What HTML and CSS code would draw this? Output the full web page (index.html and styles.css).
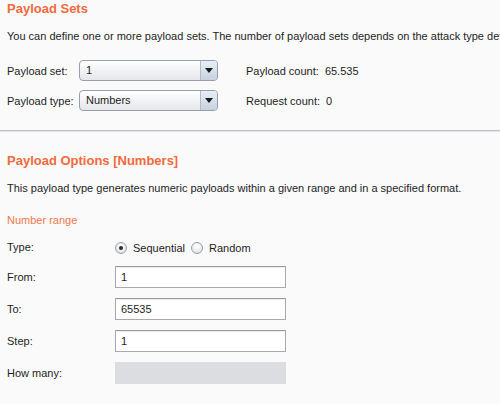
FILE: index.html
```html
<!DOCTYPE html>
<html lang="en">
<head>
  <meta charset="UTF-8">
  <title>Payloads</title>
  <link rel="stylesheet" href="styles.css">
</head>
<body>
  <section class="panel">
    <h2 class="title">Payload Sets</h2>
    <p class="desc">You can define one or more payload sets. The number of payload sets depends on the attack type defined in the Positions tab.</p>
    <div class="set-grid">
      <span class="label">Payload set:</span>
      <div class="combo"><span class="combo-value">1</span><span class="combo-arrow"></span></div>
      <span class="count">Payload count:&nbsp; 65.535</span>

      <span class="label">Payload type:</span>
      <div class="combo"><span class="combo-value">Numbers</span><span class="combo-arrow"></span></div>
      <span class="count">Request count:&nbsp; 0</span>
    </div>
  </section>

  <div class="divider"></div>

  <section class="panel">
    <h2 class="title title-options">Payload Options [Numbers]</h2>
    <p class="desc">This payload type generates numeric payloads within a given range and in a specified format.</p>
    <h3 class="subtitle">Number range</h3>
    <div class="range-grid">
      <span class="label">Type:</span>
      <div class="radios">
        <label class="radio"><span class="dot checked"></span>Sequential</label>
        <label class="radio"><span class="dot"></span>Random</label>
      </div>

      <span class="label">From:</span>
      <input class="field" type="text" value="1">

      <span class="label">To:</span>
      <input class="field" type="text" value="65535">

      <span class="label">Step:</span>
      <input class="field" type="text" value="1">

      <span class="label">How many:</span>
      <input class="field disabled" type="text" value="" disabled>
    </div>
  </section>
</body>
</html>
```

FILE: styles.css
```css
* {
  box-sizing: border-box;
}
body {
  margin: 0;
  background: #fafafa;
  font-family: "Liberation Sans", Arial, sans-serif;
  font-size: 11px;
  color: #1e1e1e;
  overflow: hidden;
}
.panel {
  padding: 0 7px;
}
.title {
  margin: 0;
  font-size: 13px;
  line-height: 18px;
  font-weight: bold;
  color: #f26a3d;
}
.title-options {
  margin-top: 20px;
}
.desc {
  margin: 9px 0 0;
  line-height: 18px;
  white-space: nowrap;
}
.label {
  white-space: nowrap;
}
.set-grid {
  display: grid;
  grid-template-columns: 72px 139px auto;
  grid-auto-rows: 21px;
  row-gap: 9px;
  align-items: center;
  margin-top: 15px;
}
.count {
  padding-left: 28px;
}
.combo {
  display: flex;
  height: 21px;
  border: 1px solid #9a9ea6;
  border-radius: 4px;
  background: linear-gradient(#ffffff, #e4e6ea);
  overflow: hidden;
}
.combo-value {
  flex: 1;
  padding-left: 6px;
  line-height: 19px;
}
.combo-arrow {
  width: 17px;
  border-left: 1px solid #b4bac4;
  background: linear-gradient(#e8eef6, #c6d2e0);
  position: relative;
}
.combo-arrow::after {
  content: "";
  position: absolute;
  left: 4px;
  top: 7px;
  border-left: 4px solid transparent;
  border-right: 4px solid transparent;
  border-top: 5px solid #1a1a1a;
}
.divider {
  margin-top: 19px;
  border-top: 1px solid #c0c0c4;
  border-bottom: 1px solid #e6e6e8;
}
.subtitle {
  margin: 14px 0 0;
  font-size: 11px;
  line-height: 18px;
  font-weight: normal;
  color: #f0784f;
}
.range-grid {
  display: grid;
  grid-template-columns: 108px 171px;
  align-items: center;
  row-gap: 10px;
  margin-top: 9px;
}
.range-grid .label {
  height: 22px;
  line-height: 22px;
}
.range-grid .label:first-child {
  height: 18px;
  line-height: 18px;
}
.radios {
  display: flex;
  align-items: center;
  height: 18px;
  margin-bottom: -2px;
}
.radio {
  display: flex;
  align-items: center;
  margin-right: 6px;
}
.dot {
  width: 12px;
  height: 12px;
  margin-right: 6px;
  border: 1px solid #9a9ea6;
  border-radius: 50%;
  background: radial-gradient(circle at 50% 35%, #ffffff, #d9dde3);
  position: relative;
}
.dot.checked::after {
  content: "";
  position: absolute;
  left: 3px;
  top: 3px;
  width: 4px;
  height: 4px;
  border-radius: 50%;
  background: #2a2a2a;
}
.field {
  width: 171px;
  height: 22px;
  margin: 0;
  padding: 0 5px;
  font-family: inherit;
  font-size: 11px;
  color: #1e1e1e;
  background: #ffffff;
  border: 1px solid #a9a9a9;
  border-top-color: #9a9a9a;
  box-shadow: inset 0 1px 1px rgba(0, 0, 0, 0.08);
  outline: none;
}
.field.disabled {
  background: #dcdde0;
  border-color: #dcdde0;
  box-shadow: none;
}
```
